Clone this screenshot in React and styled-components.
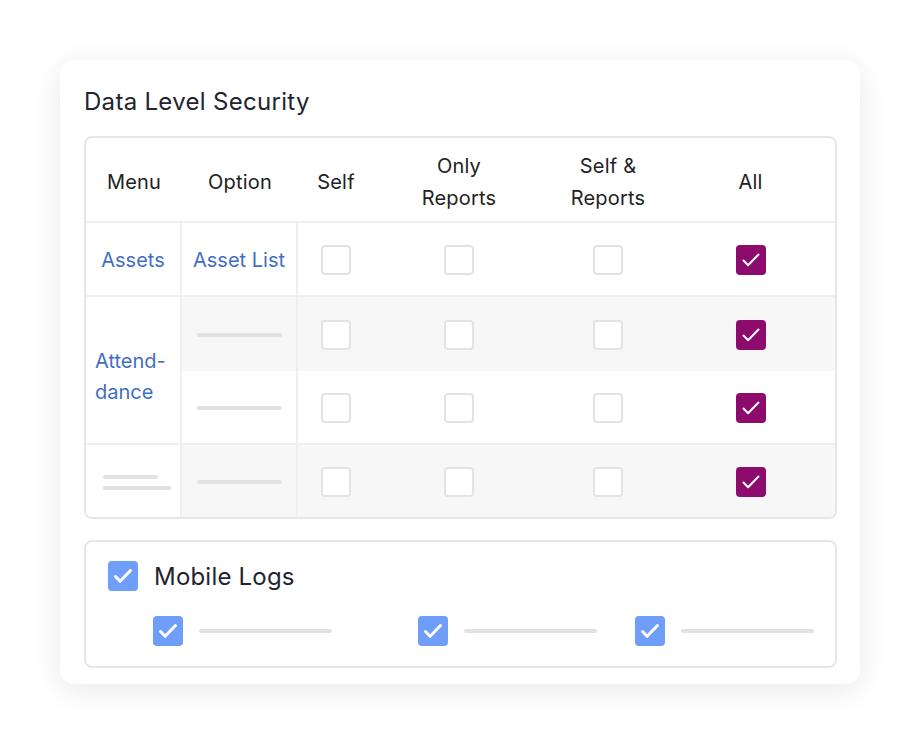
import React from "react";
import styled, { createGlobalStyle } from "styled-components";

const GlobalStyle = createGlobalStyle`
  body {
    margin: 0;
    background: #ffffff;
    font-family: "Inter", "Noto Sans", sans-serif;
  }
`;

const rows = [
  { menu: "Assets", options: ["Asset List"], checks: [[false, false, false, true]] },
  {
    menu: "Attend-\ndance",
    options: [null, null],
    checks: [
      [false, false, false, true],
      [false, false, false, true],
    ],
  },
  { menu: null, options: [null], checks: [[false, false, false, true]] },
];

const Page = styled.div`
  padding: 60px;
`;

const Card = styled.div`
  width: 800px;
  box-sizing: border-box;
  background: #fff;
  border-radius: 14px;
  box-shadow: 0 6px 30px rgba(0, 0, 0, 0.09);
  padding: 26px 23px 16px 24px;
`;

const Title = styled.h2`
  margin: 0 0 18px;
  font-size: 24px;
  font-weight: 400;
  letter-spacing: 0.3px;
  color: #1f2430;
  line-height: 32px;
`;

const Table = styled.div`
  display: grid;
  grid-template-columns: 96px 116px 76px 170px 128px 1fr;
  border: 2px solid #e6e6e6;
  border-radius: 8px;
  overflow: hidden;
`;

const HeadCell = styled.div`
  box-sizing: border-box;
  height: 85px;
  display: flex;
  align-items: center;
  justify-content: center;
  text-align: center;
  font-size: 20px;
  letter-spacing: 0.2px;
  line-height: 32px;
  color: #222;
  border-bottom: 2px solid #efefef;
  white-space: pre-line;
  padding-top: 5px;
  padding-right: ${(p) => (p.$end ? "6px" : "0")};
`;

const Cell = styled.div`
  box-sizing: border-box;
  display: flex;
  align-items: center;
  justify-content: ${(p) => (p.$left ? "flex-start" : "center")};
  padding-left: ${(p) => (p.$left ? "9px" : "0")};
  padding-top: ${(p) => (p.$span ? "13px" : "2px")};
  padding-right: ${(p) => (p.$end ? "6px" : "0")};
  background: ${(p) => (p.$shade ? "#f7f7f7" : "#fff")};
  border-right: ${(p) => (p.$divider ? "2px solid #efefef" : "none")};
  border-bottom: ${(p) => (p.$last ? "2px solid #efefef" : "none")};
  grid-row: ${(p) => (p.$span ? `span ${p.$span}` : "auto")};
  height: ${(p) => (p.$span ? "auto" : p.$final ? "72px" : "74px")};
  font-size: 20px;
  line-height: 31px;
  white-space: pre-line;
`;

const LinkText = styled.span`
  color: #3f6fc4;
`;

const Bar = styled.div`
  width: ${(p) => p.$w}px;
  height: 4px;
  border-radius: 2px;
  background: #e2e2e2;
`;

const BarStack = styled.div`
  display: flex;
  flex-direction: column;
  gap: 7px;
  padding-left: 7px;
`;

const Box = styled.div`
  width: 30px;
  height: 30px;
  box-sizing: border-box;
  border-radius: 4px;
  flex-shrink: 0;
  display: flex;
  align-items: center;
  justify-content: center;
  background: ${(p) => (p.$on ? p.$color : "#fff")};
  border: ${(p) => (p.$on ? "none" : "2px solid #e3e3e3")};
`;

const Tick = ({ weight }) => (
  <svg width="30" height="30" viewBox="0 0 30 30" fill="none">
    <path
      d="M7.5 15.5l4.6 4.8L22.5 9.5"
      stroke="#fff"
      strokeWidth={weight}
      strokeLinecap="round"
      strokeLinejoin="round"
    />
  </svg>
);

const CheckBox = ({ on, color = "#8c0b6d", weight = 2 }) => (
  <Box $on={on} $color={color}>
    {on && <Tick weight={weight} />}
  </Box>
);

const LogsPanel = styled.div`
  margin-top: 21px;
  border: 2px solid #e6e6e6;
  border-radius: 8px;
  padding: 19px 22px 20px 22px;
`;

const LogsHead = styled.div`
  display: flex;
  align-items: center;
  gap: 16px;
  font-size: 24px;
  letter-spacing: 0.2px;
  color: #1f2430;
`;

const LogsItems = styled.div`
  display: grid;
  grid-template-columns: 265px 217px 1fr;
  padding-left: 45px;
  margin-top: 25px;
`;

const LogItem = styled.div`
  display: flex;
  align-items: center;
  gap: 16px;
`;

const headers = ["Menu", "Option", "Self", "Only\nReports", "Self &\nReports", "All"];

export default function App() {
  return (
    <Page>
      <GlobalStyle />
      <Card>
        <Title>Data Level Security</Title>
        <Table>
          {headers.map((h, i) => (
            <HeadCell key={h} $end={i === headers.length - 1}>
              {h}
            </HeadCell>
          ))}
          {rows.map((row, ri) => {
            const last = ri < rows.length - 1;
            const final = ri === rows.length - 1;
            return row.options.map((opt, oi) => {
              const shade = ri > 0 && oi === 0;
              const bottom = last && oi === row.options.length - 1;
              return (
                <React.Fragment key={`${ri}-${oi}`}>
                  {oi === 0 && (
                    <Cell
                      $divider
                      $span={row.options.length > 1 ? row.options.length : 0}
                      $left={row.options.length > 1}
                      $last={last}
                      $final={final}
                    >
                      {row.menu ? (
                        <LinkText>{row.menu}</LinkText>
                      ) : (
                        <BarStack>
                          <Bar $w={55} />
                          <Bar $w={68} />
                        </BarStack>
                      )}
                    </Cell>
                  )}
                  <Cell $divider $shade={shade} $last={bottom} $final={final}>
                    {opt ? <LinkText>{opt}</LinkText> : <Bar $w={85} />}
                  </Cell>
                  {row.checks[oi].map((on, ci) => (
                    <Cell key={ci} $shade={shade} $last={bottom} $final={final} $end={ci === 3}>
                      <CheckBox on={on} />
                    </Cell>
                  ))}
                </React.Fragment>
              );
            });
          })}
        </Table>
        <LogsPanel>
          <LogsHead>
            <CheckBox on color="#6e9ef8" weight={3} />
            Mobile Logs
          </LogsHead>
          <LogsItems>
            {[0, 1, 2].map((i) => (
              <LogItem key={i}>
                <CheckBox on color="#6e9ef8" weight={3} />
                <Bar $w={133} />
              </LogItem>
            ))}
          </LogsItems>
        </LogsPanel>
      </Card>
    </Page>
  );
}
